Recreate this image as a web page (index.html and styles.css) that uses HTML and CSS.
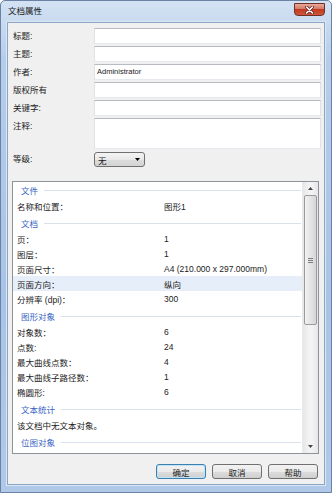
FILE: index.html
```html
<!DOCTYPE html>
<html lang="zh-CN">
<head>
    <meta charset="UTF-8">
    <title>文档属性</title>
    <link rel="stylesheet" href="styles.css">
</head>
<body>
    <div class="window">
        <div class="titlebar">
            <span class="title">文档属性</span>
            <div class="close">
                <svg width="11" height="8" viewBox="0 0 11 8">
                    <path d="M2.5 1 L8.5 7 M8.5 1 L2.5 7" stroke="#5a2020" stroke-width="3" stroke-linecap="round"/>
                    <path d="M2.5 1 L8.5 7 M8.5 1 L2.5 7" stroke="#fff" stroke-width="1.6" stroke-linecap="round"/>
                </svg>
            </div>
        </div>

        <div class="client">
            <div class="form">
                <span class="label">标题:</span><div class="field"></div>
                <span class="label">主题:</span><div class="field"></div>
                <span class="label">作者:</span><div class="field">Administrator</div>
                <span class="label">版权所有</span><div class="field"></div>
                <span class="label">关键字:</span><div class="field"></div>
                <span class="label top">注释:</span><div class="field memo"></div>
                <span class="label level">等级:</span>
                <div class="level-cell">
                    <div class="select">
                        <span>无</span>
                        <svg width="5" height="3" viewBox="0 0 5 3"><path d="M0 0 H5 L2.5 3 Z" fill="#000"/></svg>
                    </div>
                </div>
            </div>

            <div class="list">
                <div class="list-body">
                    <div class="group"><span>文件</span><i></i></div>
                    <div class="row"><span>名称和位置：</span><span>图形1</span></div>

                    <div class="group"><span>文档</span><i></i></div>
                    <div class="row"><span>页：</span><span>1</span></div>
                    <div class="row"><span>图层：</span><span>1</span></div>
                    <div class="row"><span>页面尺寸：</span><span>A4 (210.000 x 297.000mm)</span></div>
                    <div class="row hover"><span>页面方向：</span><span>纵向</span></div>
                    <div class="row"><span>分辨率 (dpi)：</span><span>300</span></div>

                    <div class="group"><span>图形对象</span><i></i></div>
                    <div class="row"><span>对象数：</span><span>6</span></div>
                    <div class="row"><span>点数:</span><span>24</span></div>
                    <div class="row"><span>最大曲线点数：</span><span>4</span></div>
                    <div class="row"><span>最大曲线子路径数：</span><span>1</span></div>
                    <div class="row"><span>椭圆形:</span><span>6</span></div>

                    <div class="group"><span>文本统计</span><i></i></div>
                    <div class="row"><span>该文档中无文本对象。</span></div>

                    <div class="group"><span>位图对象</span><i></i></div>
                </div>
                <div class="scrollbar">
                    <div class="arrow">
                        <svg width="5" height="3" viewBox="0 0 5 3"><path d="M0 3 H5 L2.5 0 Z" fill="#444"/></svg>
                    </div>
                    <div class="track">
                        <div class="thumb"><span class="grip"></span></div>
                    </div>
                    <div class="arrow">
                        <svg width="5" height="3" viewBox="0 0 5 3"><path d="M0 0 H5 L2.5 3 Z" fill="#444"/></svg>
                    </div>
                </div>
            </div>

            <div class="buttons">
                <div class="button default">确定</div>
                <div class="button">取消</div>
                <div class="button">帮助</div>
            </div>
        </div>
    </div>
</body>
</html>
```

FILE: styles.css
```css
body {
    margin: 0;
    padding: 0;
    background-color: #fff;
    font-family: "Liberation Sans", "Noto Sans CJK SC", sans-serif;
    font-size: 8.5px;
    color: #222;
}

.window {
    box-sizing: border-box;
    width: 332px;
    height: 493px;
    display: flex;
    flex-direction: column;
    padding: 0 6px 7px 6px;
    background: linear-gradient(to bottom, #d3e2f3, #b6cdea 12%, #a9c3e6 60%, #b1c9e8);
    border: 1px solid #6a82a6;
    border-radius: 5px 5px 0 0;
}

/* title bar */
.titlebar {
    height: 21px;
    display: flex;
    justify-content: space-between;
    align-items: flex-start;
}

.title {
    margin: 4px 0 0 1px;
    line-height: 12px;
    color: #1a1a1a;
}

.close {
    box-sizing: border-box;
    width: 31px;
    height: 13px;
    margin-top: 2px;
    display: flex;
    align-items: center;
    justify-content: center;
    background: linear-gradient(to bottom, #e9a99b, #d47966 45%, #c23a22 50%, #d0563c);
    border: 1px solid #6d3128;
    border-radius: 0 0 4px 4px;
}

/* client area */
.client {
    flex: 1;
    display: flex;
    flex-direction: column;
    padding: 5px 5px 5px 5px;
    background-color: #f0f0f0;
    border: 1px solid #8ba4c6;
    box-shadow: 0 0 0 1px #dce7f4;
}

.form {
    display: grid;
    grid-template-columns: 81px 227px;
    row-gap: 2px;
}

.label {
    line-height: 16px;
}

.label.top {
    line-height: 14px;
    padding-top: 1px;
}

.field {
    box-sizing: border-box;
    height: 16px;
    padding-left: 2px;
    background-color: #fff;
    border: 1px solid;
    border-color: #b8bbc2 #e0e2e8 #e6eaef #e0e2e8;
    font-size: 7.5px;
    line-height: 14px;
}

.field.memo {
    height: 31px;
}

.label.level {
    margin-top: 1px;
    line-height: 15px;
}

.level-cell {
    margin-top: 1px;
}

.select {
    box-sizing: border-box;
    width: 51px;
    height: 15px;
    display: flex;
    justify-content: space-between;
    align-items: center;
    padding: 0 4px 0 3px;
    background: linear-gradient(to bottom, #f4f4f4, #e9e9e9 50%, #dcdcdc 51%, #d4d4d4);
    border: 1px solid #707070;
    border-radius: 3px;
}

/* property list */
.list {
    flex: 1;
    display: flex;
    margin: 14px 0 0 -1px;
    background-color: #fff;
    border: 1px solid #8e929a;
}

.list-body {
    flex: 1;
    overflow: hidden;
}

.group {
    height: 16px;
    display: flex;
    align-items: center;
    gap: 6px;
    padding: 0 1px 0 8px;
    color: #3a66c4;
}

.group i {
    flex: 1;
    height: 1px;
    background-color: #d9e1ec;
}

.row + .group {
    margin-top: 2px;
}

.row {
    height: 15px;
    display: flex;
    align-items: center;
    padding-left: 4px;
}

.row span:first-child {
    width: 147px;
    flex-shrink: 0;
}

.row.hover {
    background-color: #e6eef9;
}

.scrollbar {
    width: 15px;
    display: flex;
    flex-direction: column;
    background: linear-gradient(to right, #e6e6e6, #f3f3f3 40%, #f3f3f3 60%, #e6e6e6);
    border-left: 1px solid #eaeaea;
}

.arrow {
    height: 13px;
    display: flex;
    align-items: center;
    justify-content: center;
}

.track {
    flex: 1;
}

.thumb {
    box-sizing: border-box;
    height: 130px;
    margin: 0 1px;
    display: flex;
    align-items: center;
    justify-content: center;
    background: linear-gradient(to right, #f2f2f2, #e4e4e4 50%, #d5d5d5);
    border: 1px solid #9a9a9a;
    border-radius: 2px;
}

.grip {
    width: 5px;
    height: 5px;
    background: repeating-linear-gradient(to bottom, #7d7d7d 0, #7d7d7d 1px, transparent 1px, transparent 2px);
}

/* buttons */
.buttons {
    display: flex;
    justify-content: flex-end;
    gap: 6px;
    margin-top: 10px;
    padding-right: 1px;
}

.button {
    box-sizing: border-box;
    width: 50px;
    height: 15px;
    display: flex;
    align-items: center;
    justify-content: center;
    background: linear-gradient(to bottom, #f2f2f2, #ebebeb 50%, #dddddd 51%, #cfcfcf);
    border: 1px solid #707070;
    border-radius: 3px;
}

.button.default {
    border-color: #3c7fb1;
    box-shadow: inset 0 0 0 1px #bfe3f7;
}
```
